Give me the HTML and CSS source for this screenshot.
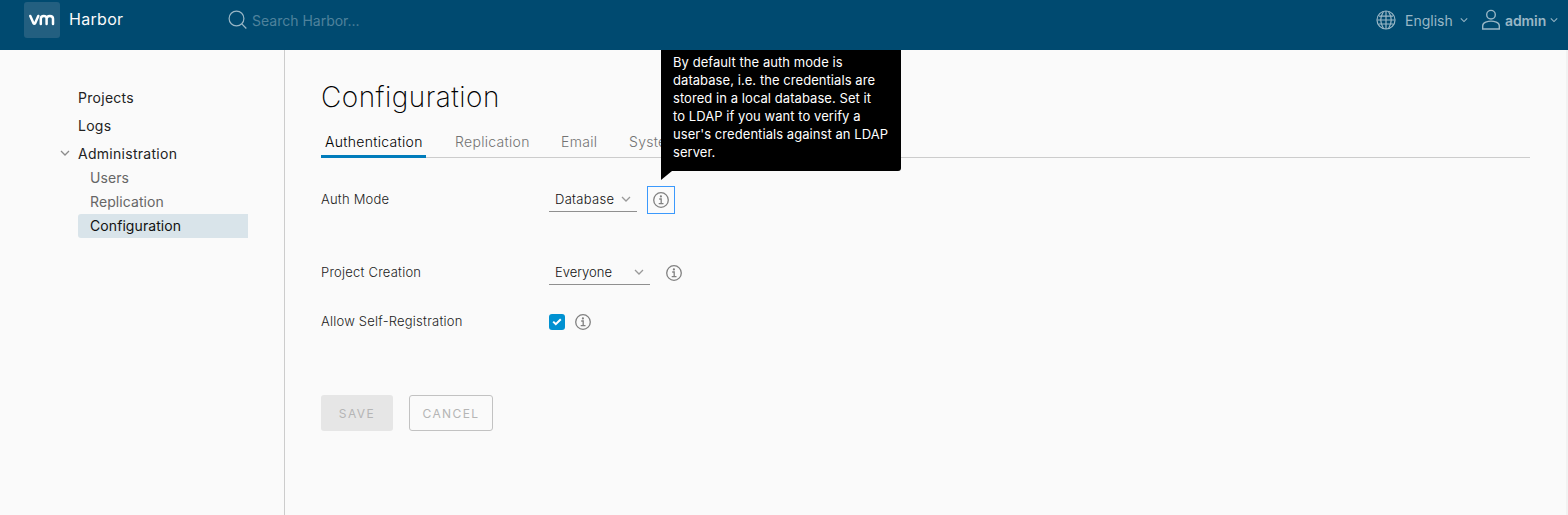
FILE: index.html
```html
<!DOCTYPE html>
<html lang="en">
<head>
<meta charset="utf-8">
<title>Harbor</title>
<link rel="stylesheet" href="styles.css">
</head>
<body>
<svg class="defs" width="0" height="0" aria-hidden="true">
  <symbol id="chevron" viewBox="0 0 10 10"><path d="M1 3l4 4 4-4"/></symbol>
  <symbol id="info" viewBox="0 0 16 16"><circle cx="8" cy="8" r="7.3"/><path d="M6.2 7h2v4.7M5.7 11.7h4.8" /><circle class="dot" cx="7.9" cy="4.4" r="1.1"/></symbol>
</svg>
<header class="header">
  <a class="brand">
    <span class="logo"><svg width="26" height="12" viewBox="0 0 26 12"><path d="M1.300 2l3.200 7.200q.8 1.200 1.600 0L9.300 2M11.800 10V4.800q0-2.800 2.900-2.800t2.900 2.800V10M17.600 4.800q0-2.800 3.200-2.800t3.200 2.800V10"/></svg></span>
    <span class="brand-name">Harbor</span>
  </a>
  <div class="search">
    <svg width="20" height="20" viewBox="0 0 20 20"><circle cx="8.500" cy="8.500" r="7.400"/><path d="M13.800 13.800l4.500 4.700"/></svg>
    <span class="search-text">Search Harbor...</span>
  </div>
  <div class="actions">
    <svg class="globe" width="20" height="20" viewBox="0 0 20 20"><circle cx="10" cy="10" r="9"/><path d="M10 1v18M1.500 10h17M3 6.200h14M3 14h14M7.500 1.500q-5.500 8.500 0 17M12.500 1.500q5.500 8.500 0 17"/></svg>
    <span class="language">English</span>
    <svg class="caret" width="8" height="8"><use href="#chevron"/></svg>
    <svg class="user" width="20" height="22" viewBox="0 0 20 22"><circle cx="10" cy="5.700" r="4.300"/><path d="M1.700 20v-3.300q0-2.200 3-3.600 5.300-2 10.600 0 3 1.400 3 3.600V20z"/></svg>
    <span class="account">admin</span>
    <svg class="caret account-caret" width="8" height="8"><use href="#chevron"/></svg>
  </div>
</header>
<div class="body">
  <nav class="sidebar">
    <a class="nav-item"><span>Projects</span></a>
    <a class="nav-item"><span>Logs</span></a>
    <a class="nav-item group"><svg width="10" height="10"><use href="#chevron"/></svg><span>Administration</span></a>
    <a class="nav-sub">Users</a>
    <a class="nav-sub">Replication</a>
    <a class="nav-sub selected">Configuration</a>
  </nav>
  <main class="content">
    <h1 class="title">Configuration</h1>
    <div class="tabs">
      <a class="tab active">Authentication</a>
      <a class="tab replication">Replication</a>
      <a class="tab email">Email</a>
      <a class="tab system">System Settings</a>
    </div>
    <form class="form">
      <div class="row auth">
        <span class="label">Auth Mode</span>
        <span class="select"><span>Database</span><svg width="10" height="10"><use href="#chevron"/></svg></span>
        <span class="info focused"><svg width="16" height="16"><use href="#info"/></svg>
          <span class="tooltip">By default the auth mode is<br>database, i.e. the credentials are<br>stored in a local database. Set it<br>to LDAP if you want to verify a<br>user's credentials against an LDAP<br>server.</span>
        </span>
      </div>
      <div class="row creation">
        <span class="label">Project Creation</span>
        <span class="select wide"><span>Everyone</span><svg width="10" height="10"><use href="#chevron"/></svg></span>
        <span class="info"><svg width="16" height="16"><use href="#info"/></svg></span>
      </div>
      <div class="row registration">
        <span class="label">Allow Self-Registration</span>
        <span class="checkbox"><svg width="16" height="16" viewBox="0 0 16 16"><path d="M4.200 7.600l2.600 2.600 5-5"/></svg></span>
        <span class="info"><svg width="16" height="16"><use href="#info"/></svg></span>
      </div>
      <div class="buttons">
        <span class="btn save"><span>SAVE</span></span>
        <span class="btn cancel"><span>CANCEL</span></span>
      </div>
    </form>
  </main>
</div>
</body>
</html>
```

FILE: styles.css
```css
* { box-sizing: border-box; }
body {
  margin: 0;
  height: 515px;
  overflow: hidden;
  background: #fafafa;
  color: #222;
  font-family: Inter, "Open Sans", sans-serif;
  font-size: 14px;
}
svg { display: block; flex: none; fill: none; stroke: currentColor; }
.defs { position: absolute; }
.header {
  display: flex;
  height: 50px;
  padding-left: 24px;
  background: #004a70;
  color: #fafafa;
}
.brand { display: flex; width: 204px; padding-top: 2px; }
.logo {
  display: flex;
  align-items: center;
  justify-content: center;
  width: 36px;
  height: 36px;
  border-radius: 3px;
  background: #235f80;
}
.logo svg { stroke: #fff; stroke-width: 2.5; stroke-linecap: round; stroke-linejoin: round; }
.brand-name { margin-left: 9px; font-size: 16px; line-height: 35px; letter-spacing: .3px; }
.search { display: flex; color: #99b7c6; padding-top: 10px; }
.search svg { stroke-width: 1.200; }
.search-text { margin-left: 4px; font-size: 14px; line-height: 22px; color: #4f829c; }
.actions { display: flex; align-items: center; height: 40px; margin-left: auto; padding-right: 10px; color: #99b7c6; }
.globe { stroke-width: 1.200; }
.language { width: 55px; margin-left: 9px; }
.caret { stroke-width: 1.300; }
.user { margin-left: 13px; stroke-width: 1.400; }
.account { width: 45px; margin-left: 4px; font-weight: 600; letter-spacing: -.1px; }
.body { display: flex; height: 465px; border-right: 2px solid #f2f2f2; }
.sidebar { width: 285px; flex: none; padding: 33px 36px 0 60px; border-right: 1px solid #ccc; }
.nav-item { display: flex; align-items: center; height: 28px; padding-left: 18px; color: #222; letter-spacing: .28px; }
.group { padding-left: 0; gap: 8px; margin-bottom: -1px; }
.group svg { color: #8c8c8c; stroke-width: 1.300; }
.nav-sub { display: block; height: 24px; margin-left: 18px; padding-left: 12px; line-height: 24px; color: #666; letter-spacing: .08px; }
.selected { background: #d9e4ea; color: #111; border-radius: 3px 0 0 3px; }
.content { flex: 1; padding: 30px 36px 0 36px; }
.title { margin: 0; height: 36px; font-size: 28px; line-height: 35px; font-weight: 200; letter-spacing: .48px; color: #000; }
.tabs { display: flex; height: 42px; padding-top: 9px; border-bottom: 1px solid #ccc; color: #737373; }
.tab { height: 33px; line-height: 34px; font-weight: 300; letter-spacing: .3px; white-space: nowrap; }
.active { width: 105px; margin-right: 29px; padding-left: 4px; color: #000; box-shadow: inset 0 -3px #007cbb; }
.replication { width: 106px; }
.email { width: 68px; }
.system { width: 33px; overflow: hidden; }
.row { display: flex; align-items: center; height: 28px; font-size: 13px; }
.auth { margin-top: 28px; }
.creation { margin-top: 45px; }
.registration { margin-top: 21px; }
.label { width: 228px; font-weight: 300; letter-spacing: .22px; position: relative; top: -1px; }
.select { display: flex; align-items: center; justify-content: space-between; width: 88px; height: 24px; padding: 0 6px 1px; border-bottom: 1px solid #8f8f8f; color: #111; font-weight: 300; letter-spacing: .3px; }
.select svg { color: #999; stroke-width: 1.300; }
.wide { width: 101px; letter-spacing: 0; }
.info { position: relative; display: flex; align-items: center; justify-content: center; width: 28px; height: 28px; margin-left: 10px; color: #808080; }
.info svg { stroke-width: 1.300; }
.focused { border: 1px solid #3b99fc; }
.dot { fill: currentColor; stroke: none; }
.checkbox { width: 16px; height: 16px; border-radius: 3px; background: #0091d1; color: #fff; }
.checkbox svg { stroke-width: 2; }
.checkbox + .info { margin-left: 4px; }
.tooltip { position: absolute; left: 13px; bottom: 42px; width: 240px; height: 121px; padding: 3px 12px 0; border-radius: 0 0 3px 0; background: #000; color: #fff; font-size: 13px; line-height: 18px; letter-spacing: .06px; white-space: nowrap; }
.tooltip::after { content: ""; position: absolute; left: 0; top: 121px; border-top: 9px solid #000; border-right: 11px solid transparent; }
.buttons { display: flex; gap: 16px; margin-top: 59px; }
.btn { display: flex; align-items: center; justify-content: center; height: 36px; padding-top: 1px; border-radius: 3px; font-size: 12px; letter-spacing: 1.400px; color: #b5b5b5; }
.save { width: 72px; background: #e6e6e6; }
.cancel { width: 84px; border: 1px solid #c2c2c2; }
```
